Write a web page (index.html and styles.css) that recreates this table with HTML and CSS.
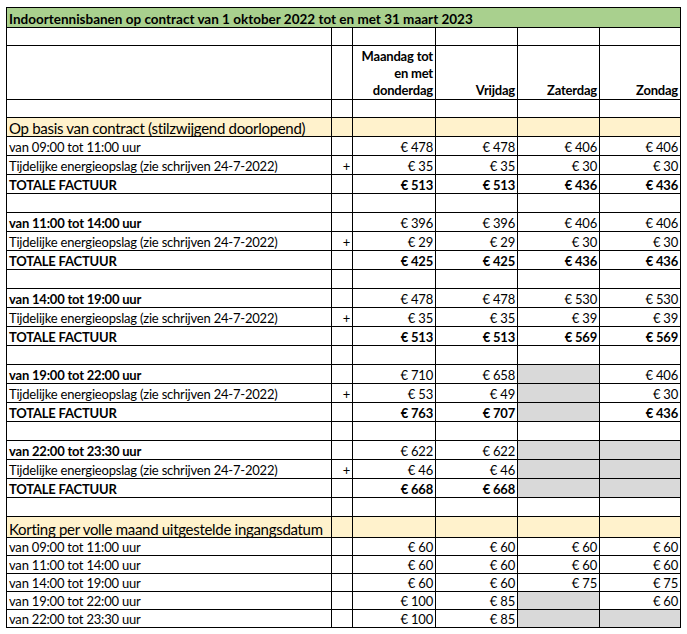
FILE: index.html
```html
<!DOCTYPE html>
<html lang="nl">
<head>
<meta charset="utf-8">
<title>Indoortennisbanen</title>
<link rel="stylesheet" href="styles.css">
</head>
<body>
<table class="sheet">
  <colgroup>
    <col class="c-label"><col class="c-plus"><col class="c-mdd"><col class="c-vr"><col class="c-za"><col class="c-zo">
  </colgroup>
  <tbody>
    <tr class="r-title"><td colspan="6" class="title">Indoortennisbanen op contract van 1 oktober 2022 tot en met 31 maart 2023</td></tr>
    <tr class="e"><td></td><td></td><td></td><td></td><td></td><td></td></tr>
    <tr class="r-head"><td></td><td></td><td class="h">Maandag tot<br>en met<br>donderdag</td><td class="h">Vrijdag</td><td class="h">Zaterdag</td><td class="h">Zondag</td></tr>
    <tr class="e"><td></td><td></td><td></td><td></td><td></td><td></td></tr>
    <tr class="r-sec"><td class="sec">Op basis van contract (stilzwijgend doorlopend)</td><td></td><td></td><td></td><td></td><td></td></tr>

    <tr class="r"><td>van 09:00 tot 11:00 uur</td><td></td><td class="n">€ 478</td><td class="n">€ 478</td><td class="n">€ 406</td><td class="n">€ 406</td></tr>
    <tr class="r"><td>Tijdelijke energieopslag (zie schrijven 24-7-2022)</td><td class="n">+</td><td class="n">€ 35</td><td class="n">€ 35</td><td class="n">€ 30</td><td class="n">€ 30</td></tr>
    <tr class="r b"><td>TOTALE FACTUUR</td><td></td><td class="n">€ 513</td><td class="n">€ 513</td><td class="n">€ 436</td><td class="n">€ 436</td></tr>
    <tr class="r"><td></td><td></td><td></td><td></td><td></td><td></td></tr>

    <tr class="r"><td class="bl">van 11:00 tot 14:00 uur</td><td></td><td class="n">€ 396</td><td class="n">€ 396</td><td class="n">€ 406</td><td class="n">€ 406</td></tr>
    <tr class="r"><td>Tijdelijke energieopslag (zie schrijven 24-7-2022)</td><td class="n">+</td><td class="n">€ 29</td><td class="n">€ 29</td><td class="n">€ 30</td><td class="n">€ 30</td></tr>
    <tr class="r b"><td>TOTALE FACTUUR</td><td></td><td class="n">€ 425</td><td class="n">€ 425</td><td class="n">€ 436</td><td class="n">€ 436</td></tr>
    <tr class="r"><td></td><td></td><td></td><td></td><td></td><td></td></tr>

    <tr class="r"><td class="bl">van 14:00 tot 19:00 uur</td><td></td><td class="n">€ 478</td><td class="n">€ 478</td><td class="n">€ 530</td><td class="n">€ 530</td></tr>
    <tr class="r"><td>Tijdelijke energieopslag (zie schrijven 24-7-2022)</td><td class="n">+</td><td class="n">€ 35</td><td class="n">€ 35</td><td class="n">€ 39</td><td class="n">€ 39</td></tr>
    <tr class="r b"><td>TOTALE FACTUUR</td><td></td><td class="n">€ 513</td><td class="n">€ 513</td><td class="n">€ 569</td><td class="n">€ 569</td></tr>
    <tr class="r"><td></td><td></td><td></td><td></td><td></td><td></td></tr>

    <tr class="r"><td class="bl">van 19:00 tot 22:00 uur</td><td></td><td class="n">€ 710</td><td class="n">€ 658</td><td class="g"></td><td class="n">€ 406</td></tr>
    <tr class="r"><td>Tijdelijke energieopslag (zie schrijven 24-7-2022)</td><td class="n">+</td><td class="n">€ 53</td><td class="n">€ 49</td><td class="g"></td><td class="n">€ 30</td></tr>
    <tr class="r b"><td>TOTALE FACTUUR</td><td></td><td class="n">€ 763</td><td class="n">€ 707</td><td class="g"></td><td class="n">€ 436</td></tr>
    <tr class="r"><td></td><td></td><td></td><td></td><td></td><td></td></tr>

    <tr class="r"><td class="bl">van 22:00 tot 23:30 uur</td><td></td><td class="n">€ 622</td><td class="n">€ 622</td><td class="g"></td><td class="g"></td></tr>
    <tr class="r"><td>Tijdelijke energieopslag (zie schrijven 24-7-2022)</td><td class="n">+</td><td class="n">€ 46</td><td class="n">€ 46</td><td class="g"></td><td class="g"></td></tr>
    <tr class="r b"><td>TOTALE FACTUUR</td><td></td><td class="n">€ 668</td><td class="n">€ 668</td><td class="g"></td><td class="g"></td></tr>
    <tr class="r"><td></td><td></td><td></td><td></td><td></td><td></td></tr>

    <tr class="r-sec2"><td class="sec">Korting per volle maand uitgestelde ingangsdatum</td><td></td><td></td><td></td><td></td><td></td></tr>
    <tr class="r2"><td>van 09:00 tot 11:00 uur</td><td></td><td class="n">€ 60</td><td class="n">€ 60</td><td class="n">€ 60</td><td class="n">€ 60</td></tr>
    <tr class="r2"><td>van 11:00 tot 14:00 uur</td><td></td><td class="n">€ 60</td><td class="n">€ 60</td><td class="n">€ 60</td><td class="n">€ 60</td></tr>
    <tr class="r2"><td>van 14:00 tot 19:00 uur</td><td></td><td class="n">€ 60</td><td class="n">€ 60</td><td class="n">€ 75</td><td class="n">€ 75</td></tr>
    <tr class="r2"><td>van 19:00 tot 22:00 uur</td><td></td><td class="n">€ 100</td><td class="n">€ 85</td><td class="g"></td><td class="n">€ 60</td></tr>
    <tr class="r2"><td>van 22:00 tot 23:30 uur</td><td></td><td class="n">€ 100</td><td class="n">€ 85</td><td class="g"></td><td class="g"></td></tr>
  </tbody>
</table>
</body>
</html>
```

FILE: styles.css
```css
html, body {
  margin: 0;
  padding: 0;
  background: #ffffff;
}

body {
  padding: 7px 0 0 6px;
  font-family: Lato, "Open Sans", sans-serif;
  font-size: 13px;
  letter-spacing: -0.2px;
  color: #000000;
}

.sheet {
  border-collapse: collapse;
  table-layout: fixed;
  width: 675px;
}

.c-label { width: 325px; }
.c-plus { width: 21px; }
.c-mdd { width: 83px; }
.c-vr { width: 82px; }
.c-za { width: 82px; }
.c-zo { width: 81px; }

.sheet td {
  border: 1px solid #000000;
  padding: 0 2px 0 2px;
  vertical-align: bottom;
  white-space: nowrap;
  overflow: hidden;
  line-height: 16px;
}

.r-title td { height: 19px; }
.e td { height: 17px; }
.r td { height: 18px; }
.r2 td { height: 17px; }
.r-head td { height: 53px; }
.r-sec td { height: 18px; background: #fff2cc; }
.r-sec2 td { height: 20px; background: #fff2cc; }

.title {
  background: #a9d08e;
  font-weight: 700;
  font-size: 13.5px;
  letter-spacing: 0;
}

.sec {
  font-size: 15px;
  letter-spacing: -0.3px;
  overflow: visible !important;
}

.h {
  font-weight: 700;
  text-align: right;
  line-height: 17px !important;
}

.n { text-align: right; }

.b td, .bl { font-weight: 700; }

.g { background: #d9d9d9; }
```
